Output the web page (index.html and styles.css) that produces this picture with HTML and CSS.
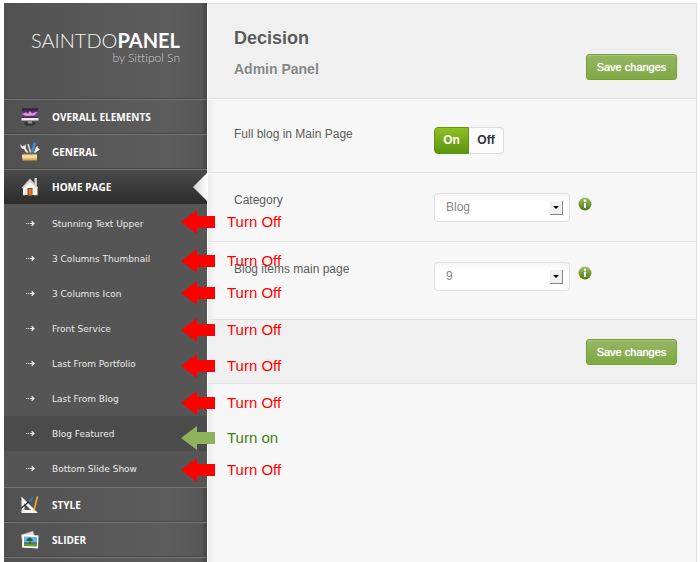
FILE: index.html
```html
<!DOCTYPE html>
<html lang="en">
<head>
<meta charset="utf-8">
<meta name="viewport" content="width=device-width, initial-scale=1">
<title>Saintdo Panel</title>
<link rel="stylesheet" href="styles.css">
</head>
<body>
<svg class="defs" width="0" height="0" aria-hidden="true">
  <defs>
    <linearGradient id="space" x1="0" y1="0" x2="0" y2="1"><stop offset="0" stop-color="#1c1730"/><stop offset=".6" stop-color="#8a4aa2"/><stop offset="1" stop-color="#3a2450"/></linearGradient>
    <linearGradient id="info" x1="0" y1="0" x2="0" y2="1"><stop offset="0" stop-color="#a3c267"/><stop offset="1" stop-color="#4c7a10"/></linearGradient>
    <linearGradient id="wood" x1="0" y1="0" x2="0" y2="1"><stop offset="0" stop-color="#fbe3ab"/><stop offset="1" stop-color="#dba24c"/></linearGradient>
    <linearGradient id="fold" x1="0" y1="0" x2="1" y2="0"><stop offset="0" stop-color="#d4d4d4"/><stop offset="1" stop-color="#fdfdfd"/></linearGradient>
    <g id="dots"><path d="M0 3.5h1.2M2 3.5h1.2" stroke="#ddd" stroke-width="1.2"/><path d="M4 3.5h4M5.6 1.2L8 3.5L5.600 5.800" fill="none" stroke="#eee" stroke-width="1.200"/></g>
    <path id="arrow" d="M0 12L16 0V6H34V18H16V24Z"/>
    <g id="infoicon"><circle cx="7" cy="7" r="6.500" fill="url(#info)"/><circle cx="7" cy="3.800" r="1.200" fill="#fff"/><path d="M6 5.700H8V11H6Z" fill="#fff"/></g>
  </defs>
</svg>
<div class="panel">
  <aside class="sidebar">
    <div class="brand">
      <div class="brand-name">SAINTDO<b>PANEL</b></div>
      <div class="brand-by">by Sittipol Sn</div>
    </div>
    <nav>
      <ul class="menu">
        <li><a class="item" href="#overall"><svg class="icon" viewBox="0 0 20 20" aria-hidden="true"><ellipse cx="10" cy="16.500" rx="6" ry="2" fill="#333"/><path d="M2 1.500H18V11H2Z" fill="url(#space)"/><path d="M2 7L6 5.500L8 7L10 4L12 6.500L18 4.500L14 8.500L6 9Z" fill="#f0a8dc" opacity=".85"/><path d="M1.500 11H18.500V13.500H1.500Z" fill="#ececee"/><path d="M8.500 13.500H11.500L12.500 16.500H7.500Z" fill="#8f8f8f"/></svg>OVERALL ELEMENTS</a></li>
        <li><a class="item" href="#general"><svg class="icon" viewBox="0 0 20 20" aria-hidden="true"><path d="M3 4L9 13M18 6L13 13" stroke="#e4e4e4" stroke-width="2.200"/><path d="M0.500 2V5L3 7L6 5.500L5.500 2L4 4.500L2 4Z" fill="#eee"/><path d="M16 5L18 4L17.500 6.500L20 7L18 9L15 8Z" fill="#eee"/><path d="M8 2L11 12" stroke="#cfd4d8" stroke-width="1.600"/><path d="M14.500 2L12.500 9" stroke="#4a86c5" stroke-width="3" stroke-linecap="round"/><path d="M3 10.500H17V13H3Z" fill="#76643f"/><path d="M2 12.500H17V18.500H2.500Z" fill="url(#wood)"/><path d="M2 14.500H17V15.500H2Z" fill="#fff3cc"/></svg>GENERAL</a></li>
        <li class="open">
          <a class="item current" href="#home"><svg class="icon" viewBox="0 0 20 20" aria-hidden="true"><path d="M14.500 1H16.800V9H14.500Z" fill="#d9d9d9"/><path d="M10 3L17.500 10.500V18H3V10.500Z" fill="#f7f5f0"/><path d="M10 1.500L1.800 10.500L3 11.500L10 5L17 11.500L18.200 10.500Z" fill="#cfcfcf"/><path d="M7.500 11H12.500V18.500H7.500Z" fill="#8c4318"/><path d="M8.500 12H11.800V18.500H8.500Z" fill="#d5772c"/><path d="M3 18L5.500 17V18.500H3ZM14 18L17.500 17V18.500H14Z" fill="#b5b89b"/></svg>HOME PAGE</a>
          <svg class="pointer" viewBox="0 0 14 28" aria-hidden="true"><path d="M14 0V28L0 14Z" fill="url(#fold)"/></svg>
          <ul class="submenu">
            <li><a href="#upper"><svg class="dots" viewBox="0 0 9 7" aria-hidden="true"><use href="#dots"/></svg>Stunning Text Upper</a></li>
            <li><a href="#thumb"><svg class="dots" viewBox="0 0 9 7" aria-hidden="true"><use href="#dots"/></svg>3 Columns Thumbnail</a></li>
            <li><a href="#icon"><svg class="dots" viewBox="0 0 9 7" aria-hidden="true"><use href="#dots"/></svg>3 Columns Icon</a></li>
            <li><a href="#service"><svg class="dots" viewBox="0 0 9 7" aria-hidden="true"><use href="#dots"/></svg>Front Service</a></li>
            <li><a href="#portfolio"><svg class="dots" viewBox="0 0 9 7" aria-hidden="true"><use href="#dots"/></svg>Last From Portfolio</a></li>
            <li><a href="#blog"><svg class="dots" viewBox="0 0 9 7" aria-hidden="true"><use href="#dots"/></svg>Last From Blog</a></li>
            <li><a class="selected" href="#featured"><svg class="dots" viewBox="0 0 9 7" aria-hidden="true"><use href="#dots"/></svg>Blog Featured</a></li>
            <li><a href="#slideshow"><svg class="dots" viewBox="0 0 9 7" aria-hidden="true"><use href="#dots"/></svg>Bottom Slide Show</a></li>
          </ul>
        </li>
        <li><a class="item" href="#style"><svg class="icon" viewBox="0 0 20 20" aria-hidden="true"><path fill-rule="evenodd" d="M1.500 1.500L18 18H1.500ZM4.500 8.500V15H11Z" fill="#f4f4f4"/><path d="M1 13.500L9 6.500" stroke="#222" stroke-width="1.200"/><path d="M9 6.500L13 2.500" stroke="#3f7fb8" stroke-width="1.600"/><path d="M17.500 1.500L14 15" stroke="#e6a52e" stroke-width="1.800"/><path d="M13.200 14.500L14.900 15L13.300 17.500Z" fill="#f5dfb5"/></svg>STYLE</a></li>
        <li><a class="item" href="#slider"><svg class="icon" viewBox="0 0 20 20" aria-hidden="true"><path d="M1 5L13 1L17 13L4 18Z" fill="#e4e4e4" stroke="#888" stroke-width=".5"/><path d="M2.500 4.500L18.500 5.500L18 18.500L2 17.500Z" fill="#fff"/><path d="M4 6.500L17 7V12H4Z" fill="#68b4e8"/><path d="M4 12H17V16.500L4 16Z" fill="#5f9a35"/><path d="M4 13L17 12V13.500L4 14Z" fill="#2f74ae"/><path d="M10 7L13.500 10.500L11 11H7L6 10Z" fill="#28632b"/><path d="M9.500 9H10.500V14H9.500Z" fill="#4c3b1b"/></svg>SLIDER</a></li>
      </ul>
    </nav>
  </aside>
  <main class="content">
    <header class="bar">
      <div class="titles">
        <h1>Decision</h1>
        <h2>Admin Panel</h2>
      </div>
      <button class="save" type="submit" form="settings">Save changes</button>
    </header>
    <form id="settings">
      <div class="row row-first" role="radiogroup" aria-labelledby="full-label">
        <div class="label" id="full-label">Full blog in Main Page</div>
        <div class="toggle">
          <input type="radio" id="on" name="full" checked><label for="on">On</label>
          <input type="radio" id="off" name="full"><label for="off">Off</label>
        </div>
      </div>
      <div class="row">
        <label class="label" for="category">Category</label>
        <div class="control">
          <div class="select"><select id="category"><option>Blog</option></select><span class="drop"></span></div>
          <svg class="info" viewBox="0 0 14 14" aria-hidden="true"><use href="#infoicon"/></svg>
        </div>
      </div>
      <div class="row row-last">
        <label class="label" for="count">Blog items main page</label>
        <div class="control">
          <div class="select"><select id="count"><option>9</option></select><span class="drop"></span></div>
          <svg class="info" viewBox="0 0 14 14" aria-hidden="true"><use href="#infoicon"/></svg>
        </div>
      </div>
      <div class="bar bar-bottom"><button class="save" type="submit">Save changes</button></div>
    </form>
  </main>
  <div class="notes">
    <div class="note n1"><svg viewBox="0 0 34 24"><use href="#arrow"/></svg>Turn Off</div>
    <div class="note n2"><svg viewBox="0 0 34 24"><use href="#arrow"/></svg>Turn Off</div>
    <div class="note n3"><svg viewBox="0 0 34 24"><use href="#arrow"/></svg>Turn Off</div>
    <div class="note n4"><svg viewBox="0 0 34 24"><use href="#arrow"/></svg>Turn Off</div>
    <div class="note n5"><svg viewBox="0 0 34 24"><use href="#arrow"/></svg>Turn Off</div>
    <div class="note n6"><svg viewBox="0 0 34 24"><use href="#arrow"/></svg>Turn Off</div>
    <div class="note n7 on"><svg viewBox="0 0 34 24"><use href="#arrow"/></svg>Turn on</div>
    <div class="note n8"><svg viewBox="0 0 34 24"><use href="#arrow"/></svg>Turn Off</div>
  </div>
</div>
</body>
</html>
```
FILE: styles.css
```css
* { box-sizing: border-box; }
body {
  margin: 0;
  padding: 3px 3px 0 4px;
  background: #fff;
  font-family: "Liberation Sans", Arial, sans-serif;
  font-size: 12px;
  color: #5b5b5b;
}
.defs { position: absolute; }
ul { list-style: none; margin: 0; padding: 0; }
a { text-decoration: none; }

.panel {
  position: relative;
  display: flex;
  min-height: calc(100vh - 3px);
}

/* Sidebar */
.sidebar {
  flex: 0 0 203px;
  background: linear-gradient(90deg, #515151, #5d5d5d 80%, #575757 97%, #444);
}
.brand {
  height: 96px;
  padding: 25px 27px 0 0;
  text-align: right;
  font-family: Lato, sans-serif;
  font-variant-ligatures: none;
  border-bottom: 1px solid #494949;
}
.brand-name { font-size: 20px; line-height: 24px; font-weight: 300; color: #f2f2f2; }
.brand-name b { font-weight: 700; color: #fff; }
.brand-by { font-size: 12px; line-height: 12px; font-weight: 300; color: #ccc; }
.menu { font-family: "Open Sans", sans-serif; border-bottom: 1px solid #757575; }
.item {
  display: flex;
  align-items: center;
  gap: 12px;
  height: 35px;
  padding-left: 16px;
  border-top: 1px solid #757575;
  border-bottom: 1px solid #474747;
  font-size: 10px;
  font-weight: 700;
  color: #fff;
}
.item.current {
  background: linear-gradient(#4a4a4a, #2d2d2d);
  border-bottom-color: #2d2d2d;
}
.icon { width: 20px; height: 20px; }
.open { position: relative; }
.pointer { position: absolute; top: 4px; right: 0; width: 14px; height: 28px; }
.submenu { padding: 2px 0 1px; background: #555; }
.submenu a {
  display: flex;
  align-items: center;
  gap: 17px;
  height: 35px;
  padding-left: 22px;
  font-family: "DejaVu Sans", sans-serif;
  font-size: 9px;
  color: #eaeaea;
}
.submenu .selected { background: #4b4b4b; }
.dots { width: 9px; height: 7px; }

/* Content */
.content {
  flex: 1;
  min-width: 0;
  background: linear-gradient(90deg, #ebebeb, #f7f7f7 7px);
  border: 1px solid #e0e0e0;
  border-left-color: #fff;
  border-bottom: 0;
}
.bar {
  display: flex;
  justify-content: space-between;
  align-items: flex-end;
  height: 95px;
  padding: 0 19px 18px 26px;
  background: #f0f0f0;
  border-bottom: 1px solid #e2e2e2;
}
.bar-bottom {
  justify-content: flex-end;
  height: 65px;
  border-top: 1px solid #e2e2e2;
}
.titles { align-self: flex-start; padding-top: 22px; }
h1, h2 { margin: 0; text-shadow: 0 1px 0 #fff; }
h1 { font-size: 18px; line-height: 24px; color: #5a5a5a; }
h2 { font-size: 14px; line-height: 18px; margin-top: 10px; color: #868686; }
.save {
  width: 91px;
  height: 26px;
  padding: 0;
  border: 1px solid #73a331;
  border-radius: 3px;
  background: linear-gradient(#95b663, #7fa844);
  box-shadow: inset 0 1px 0 #a6c47b;
  font: 11px "Liberation Sans", sans-serif;
  text-shadow: 0 0 1px #fff;
  color: #fff;
}
.row {
  display: grid;
  grid-template-columns: 200px 1fr;
  align-items: start;
  height: 69px;
  padding: 20px 0 0 26px;
  border-bottom: 1px solid #e2e2e2;
  box-shadow: inset 0 1px 0 #fff;
}
.row-first { height: 74px; padding-top: 28px; }
.row-last { height: 77px; border-bottom: 0; }
.label { line-height: 14px; }
.control { display: flex; gap: 8px; }
.toggle {
  display: grid;
  grid-template-columns: 1fr 1fr;
  width: 70px;
  height: 27px;
  border-radius: 4px;
  background: #fcfcfc;
}
.toggle input { position: absolute; opacity: 0; }
.toggle label {
  border: 1px solid #dcdcdc;
  border-left: 0;
  border-radius: 0 4px 4px 0;
  line-height: 25px;
  text-align: center;
  font-weight: 700;
  color: #333;
}
.toggle input:checked + label {
  border: 1px solid #5f930f;
  border-radius: 4px 0 0 4px;
  background: linear-gradient(#8fbf22, #5d9410);
  color: #fff;
}
.select { position: relative; width: 136px; }
.select select {
  appearance: none;
  width: 100%;
  height: 29px;
  padding: 0 30px 2px 11px;
  border: 1px solid #e0e0e0;
  border-radius: 4px;
  background: linear-gradient(#f5f5f5, #fff 8px);
  font: 12px "Liberation Sans", sans-serif;
  color: #888;
}
.drop {
  position: absolute;
  top: 8px;
  right: 7px;
  width: 13px;
  height: 14px;
  background: #f0f0f0;
  border-right: 1px solid #888;
  border-bottom: 1px solid #888;
  pointer-events: none;
}
.drop::after {
  content: "";
  position: absolute;
  top: 5px;
  left: 3px;
  border: 3px solid transparent;
  border-top-color: #000;
  border-bottom: 0;
}
.info { width: 14px; height: 14px; margin-top: 4px; }

/* Annotations pinned over the panel */
.notes { position: absolute; top: 0; left: 177px; }
.note {
  position: absolute;
  display: flex;
  gap: 12px;
  font-size: 15px;
  line-height: 23px;
  white-space: nowrap;
  color: #f00;
  pointer-events: none;
}
.note svg { width: 34px; height: 24px; fill: #f00; }
.note.on { color: #3f7f10; }
.note.on svg { fill: #8fb35c; }
.n1 { top: 207px; }
.n2 { top: 246px; }
.n3 { top: 278px; }
.n4 { top: 315px; }
.n5 { top: 351px; }
.n6 { top: 388px; }
.n7 { top: 423px; }
.n8 { top: 455px; }
```
